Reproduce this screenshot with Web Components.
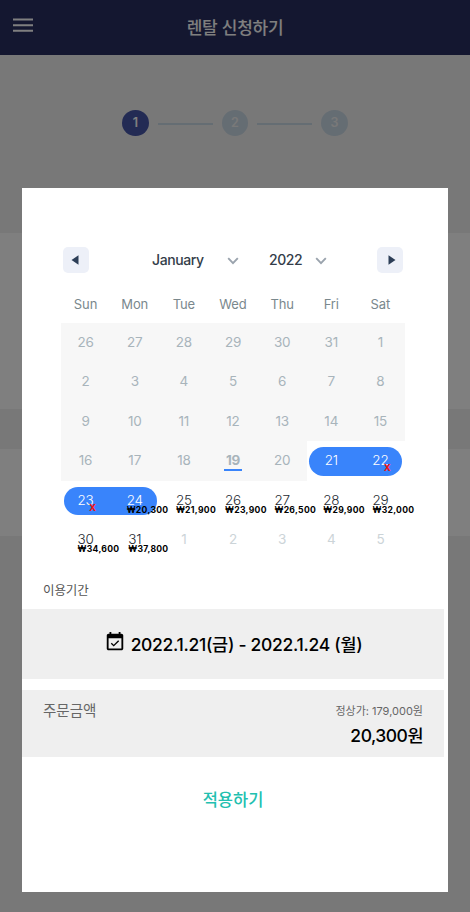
<!DOCTYPE html>
<html lang="ko">
<head>
<meta charset="utf-8">
<title>렌탈 신청하기</title>
<style>
  body { margin: 0; font-family: Inter, "Noto Sans CJK KR", sans-serif; }
</style>
</head>
<body>
<rental-page></rental-page>
<script>
const define = (name, html, setup) => {
  const template = document.createElement('template');
  template.innerHTML = html;
  customElements.define(name, class extends HTMLElement {
    connectedCallback() {
      if (this.shadowRoot) return;
      const root = this.attachShadow({ mode: 'open' });
      root.append(template.content.cloneNode(true));
      if (setup) setup(this, root);
    }
  });
};

define('app-header', `
  <style>
    :host { display: grid; grid-template-columns: 46px 1fr 46px; height: 55px; box-sizing: border-box; background: #282e60; color: #fff; align-items: center; }
    svg { display: block; margin: -4px 0 0 13px; }
    h1 { margin: 0; text-align: center; font: 500 17px/24px Inter, "Noto Sans CJK KR", sans-serif; letter-spacing: -.25px; }
  </style>
  <svg width="20" height="15" viewBox="0 0 20 15"><path d="M0 1.5h20M0 7.2h20M0 12.8h20" stroke="#fff" stroke-width="2"/></svg>
  <h1><slot></slot></h1>`);

define('step-dot', `
  <style>
    :host { display: grid; place-items: center; width: 26.5px; height: 26px; border-radius: 50%; background: #cbdae6; color: #f3f3f3; font: 600 12.5px/26px Inter, sans-serif; }
    :host([active]) { background: #4756a8; color: #fff; }
    span { margin-top: -1px; }
  </style><span><slot></slot></span>`);

define('step-progress', `
  <style>
    :host { display: flex; justify-content: center; align-items: center; gap: 9px; padding: 55px 0 97px; height: 26px; }
    i { width: 55px; height: 2px; background: #cbdae6; margin-top: 2px; }
  </style>
  <step-dot active>1</step-dot><i></i><step-dot>2</step-dot><i></i><step-dot>3</step-dot>`);

define('nav-button', `
  <style>
    :host { display: grid; place-items: center; width: 26px; height: 26px; border-radius: 5px; background: #edf0f8; }
    :host([next]) svg { transform: scaleX(-1); }
    svg { display: block; margin: 0 2px 1px 0; }
    :host([next]) svg { margin: 0 0 1px 3px; }
  </style>
  <svg width="8" height="10" viewBox="0 0 8 10"><path d="M7.5 .2v9.6L.5 5z" fill="#2c3e57"/></svg>`);

define('month-select', `
  <style>
    :host { display: flex; align-items: center; justify-content: space-between; color: #333d49; font: 500 14px/20px Inter, sans-serif; letter-spacing: -.4px; }
    svg { margin-top: 2px; }
  </style>
  <span><slot></slot></span>
  <svg width="12" height="8" viewBox="0 0 12 8"><path d="M1.2 1.2L6 6.2l4.8-5" fill="none" stroke="#9aa3ad" stroke-width="1.9"/></svg>`);

define('day-cell', `
  <style>
    :host { display: grid; place-items: center; position: relative; color: #252a31; font: 300 13.5px/20px Inter, sans-serif; }
    :host([state~="past"]) { background: #f7f7f7; color: #a8b4bb; font-weight: 400; }
    :host([state~="outside"]) { color: #ccd4d8; font-weight: 400; }
    :host([state~="range"]) { color: #fff; }
    :host([state~="today"]) { font-weight: 700; }
    .pill { position: absolute; inset: 6px 0 5px; background: #3984fb; display: none; }
    :host([state~="range"]) .pill { display: block; }
    :host([state~="start"]) .pill { left: 2.5px; border-radius: 15px 0 0 15px; }
    :host([state~="end"]) .pill { right: 2.5px; border-radius: 0 15px 15px 0; }
    .num { position: relative; margin-top: -1.5px; letter-spacing: -.2px; }
    :host([state~="today"]) .num::after { content: ""; position: absolute; left: -2px; right: -2px; bottom: -1px; height: 2px; background: #3984fb; }
    .price { position: absolute; left: 0; top: 14px; white-space: nowrap; font: 700 8.6px/12px Inter, "DejaVu Sans", sans-serif; letter-spacing: .3px; color: #000; }
    .x { position: absolute; right: -2px; top: 10px; font: 700 12px/14px "Liberation Sans", sans-serif; color: #f21616; }
    .price:empty, .x:empty { display: none; }
  </style>
  <div class="pill"></div><div class="num"><slot></slot><span class="price"></span><span class="x"></span></div>`,
  (host, root) => {
    root.querySelector('.price').textContent = host.getAttribute('price') || '';
    root.querySelector('.x').textContent = host.hasAttribute('blocked') ? 'x' : '';
  });

define('rental-calendar', `
  <style>
    :host { display: block; padding: 59px 43px 0 39px; }
    header { display: flex; align-items: center; height: 26px; padding: 0 2px; }
    .month { width: 87px; margin-left: 63px; }
    .year { width: 58px; margin: 0 auto 0 30px; }
    .week, .days { display: grid; grid-template-columns: repeat(7, 1fr); }
    .week { height: 50px; color: #7a888d; font: 400 13px/62px Inter, sans-serif; letter-spacing: -.1px; text-align: center; }
    .days { grid-template-rows: 39px 39.5px 39.5px 40px 39px 40px; }
  </style>
  <header>
    <nav-button></nav-button>
    <month-select class="month">January</month-select>
    <month-select class="year">2022</month-select>
    <nav-button next></nav-button>
  </header>
  <div class="week"></div>
  <div class="days"></div>`,
  (host, root) => {
    for (const name of ['Sun', 'Mon', 'Tue', 'Wed', 'Thu', 'Fri', 'Sat']) {
      const s = document.createElement('span');
      s.textContent = name;
      root.querySelector('.week').append(s);
    }
    const prices = { 24: '20,300', 25: '21,900', 26: '23,900', 27: '26,500', 28: '29,900', 29: '32,000', 30: '34,600', 31: '37,800' };
    const states = { 19: 'past today', 21: 'range start', 22: 'range end', 23: 'range start', 24: 'range end' };
    for (let i = 0; i < 42; i++) {
      const offset = i - 5;
      const day = offset < 1 ? offset + 31 : offset > 31 ? offset - 31 : offset;
      const cell = document.createElement('day-cell');
      cell.textContent = day;
      cell.setAttribute('state', states[offset] || (offset <= 20 ? 'past' : offset > 31 ? 'outside' : 'open'));
      if (prices[offset]) cell.setAttribute('price', '₩' + prices[offset]);
      if (offset === 22 || offset === 23) cell.setAttribute('blocked', '');
      root.querySelector('.days').append(cell);
    }
  });

define('period-summary', `
  <style>
    :host { display: block; }
    .label { padding: 19px 21px 6px; font-size: 12.5px; line-height: 24px; color: #555; letter-spacing: -.1px; }
    .box { display: flex; justify-content: center; align-items: center; gap: 5px; height: 70px; margin-right: 4px; background: #efefef; font: 500 17.5px/26px Inter, "Noto Sans CJK KR", sans-serif; letter-spacing: -.3px; color: #000; }
    svg { margin-top: -5px; }
    .box span { white-space: nowrap; padding-top: 2px; }
  </style>
  <div class="label">이용기간</div>
  <div class="box">
    <svg width="22" height="22" viewBox="0 0 24 24"><path d="M16.53 11.06L15.47 10l-4.88 4.88-2.12-2.12-1.06 1.06L10.59 17l5.94-5.94zM19 3h-1V1h-2v2H8V1H6v2H5c-1.11 0-1.99.9-1.99 2L3 19c0 1.1.89 2 2 2h14c1.1 0 2-.9 2-2V5c0-1.1-.9-2-2-2zm0 16H5V8h14v11z"/></svg>
    <span><slot></slot></span>
  </div>`);

define('order-total', `
  <style>
    :host { display: flex; justify-content: space-between; box-sizing: border-box; height: 67px; margin: 11px 4px 0 0; padding: 9px 21px 0; background: #efefef; }
    .label { font: 400 14.5px/22px Inter, "Noto Sans CJK KR", sans-serif; color: #666; padding-top: 1px; }
    .sums { display: flex; flex-direction: column; align-items: flex-end; }
    .list { font-size: 11px; line-height: 24px; color: #666; }
    .pay { font-size: 17.5px; line-height: 26px; font-weight: 500; color: #000; letter-spacing: -.5px; }
  </style>
  <span class="label">주문금액</span>
  <div class="sums"><span class="list"><slot name="list"></slot></span><span class="pay"><slot name="pay"></slot></span></div>`);

define('apply-button', `
  <style>
    :host { display: block; text-align: center; margin: 30px 4px 0 0; font: 500 16.5px/26px Inter, "Noto Sans CJK KR", sans-serif; color: #22c0b0; }
  </style><slot></slot>`);

define('modal-sheet', `
  <style>
    :host { position: absolute; inset: 0; box-sizing: border-box; padding: 188px 22px 20px; background: rgba(0,0,0,.5); }
    section { height: 704px; background: #fff; }
  </style><section><slot></slot></section>`);

define('rental-page', `
  <style>
    :host { display: block; position: relative; width: 470px; height: 912px; overflow: hidden; background: #f1f1f1; }
    .card { background: #fff; }
    .a { height: 176px; }
    .b { height: 87px; margin-top: 40px; }
  </style>
  <app-header>렌탈 신청하기</app-header>
  <step-progress></step-progress>
  <div class="card a"></div>
  <div class="card b"></div>
  <modal-sheet>
    <rental-calendar></rental-calendar>
    <period-summary>2022.1.21(금) - 2022.1.24 (월)</period-summary>
    <order-total><span slot="list">정상가: 179,000원</span><span slot="pay">20,300원</span></order-total>
    <apply-button>적용하기</apply-button>
  </modal-sheet>`);
</script>
</body>
</html>
